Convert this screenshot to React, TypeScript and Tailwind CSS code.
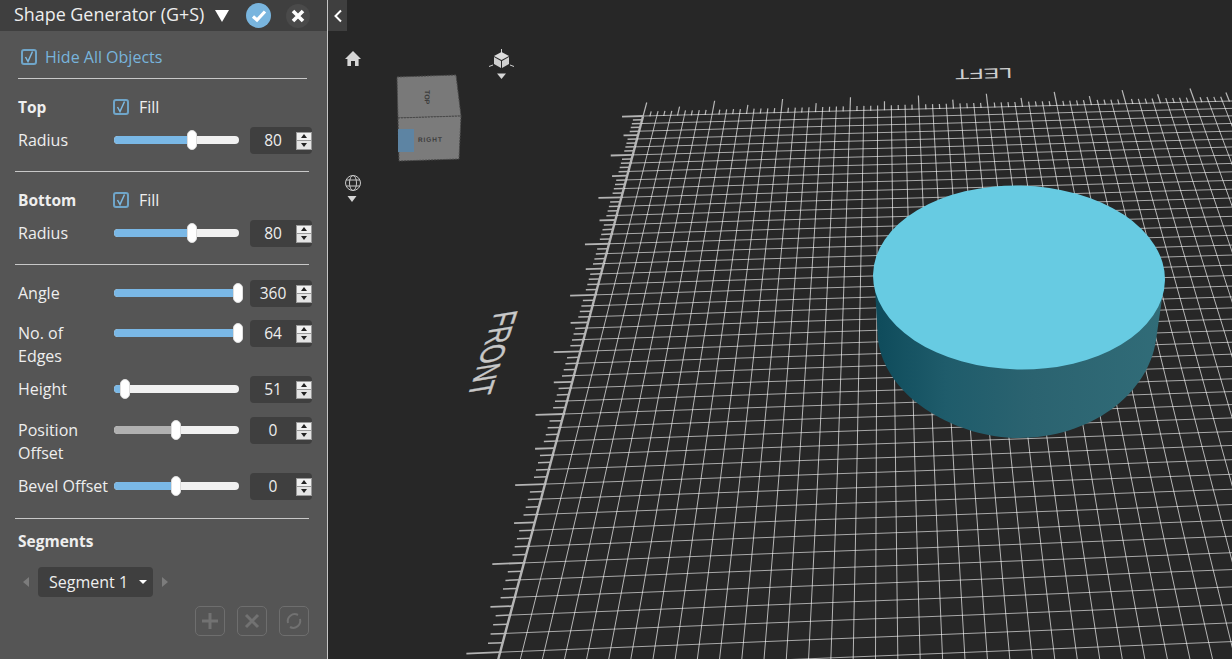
import React from "react";

// perspective of the floor grid, measured off the screenshot
const VP1 = { x: 881, y: -776 };
const VP2 = { x: 37000, y: -810 };
const K = 107700;
const W0 = 120.2;

const leftEdge = (w: number) => {
  const y = -780 + K / w;
  return { x: 881 - 0.2665 * (y + 776), y };
};
const topEdge = (n: number) => {
  const x = 643 + 6.9 * n;
  return { x, y: 116.5 - 0.0255 * (x - 643) };
};
const towardsVP2 = (p: { x: number; y: number }, x: number) => ({
  x,
  y: p.y + ((x - p.x) * (VP2.y - p.y)) / (VP2.x - p.x),
});
const towardsVP1 = (p: { x: number; y: number }, y: number) => ({
  x: VP1.x + ((p.x - VP1.x) * (y - VP1.y)) / (p.y - VP1.y),
  y,
});

function Floor() {
  const lines: React.ReactElement[] = [];
  for (let n = 0; n <= 90; n++) {
    const p = topEdge(n);
    if (n % 2 === 0) {
      const end = towardsVP1(p, 670);
      lines.push(
        <line
          key={"v" + n}
          x1={p.x}
          y1={p.y}
          x2={end.x}
          y2={end.y}
          stroke="#ffffff"
          strokeOpacity={0.66}
          strokeWidth={n === 0 ? 2.4 : 1}
        />
      );
    }
    const len = n % 10 === 0 ? 14 : n % 5 === 0 ? 9 : 5;
    const t = towardsVP1(p, p.y - len);
    lines.push(<line key={"tv" + n} x1={p.x} y1={p.y} x2={t.x} y2={t.y} stroke="#b8b8b8" strokeWidth={1.2} />);
  }
  for (let n = 0; n <= 100; n++) {
    const w = W0 - n * 0.5;
    const p = leftEdge(w);
    if (p.y > 680) break;
    if (n % 2 === 0) {
      const end = towardsVP2(p, 1240);
      lines.push(<line key={"h" + n} x1={p.x} y1={p.y} x2={end.x} y2={end.y} stroke="#ffffff" strokeOpacity={0.6} strokeWidth={1} />);
    }
    const scale = (p.y + 778) / 1430;
    const len = (n % 10 === 0 ? 34 : n % 5 === 0 ? 23 : 15) * scale;
    const t = towardsVP2(p, p.x - len);
    lines.push(<line key={"th" + n} x1={p.x} y1={p.y} x2={t.x} y2={t.y} stroke="#b4b4b4" strokeWidth={n % 5 === 0 ? 1.8 : 1.5} />);
  }
  return <g>{lines}</g>;
}

function Scene() {
  return (
    <svg className="absolute inset-0 w-full h-full" viewBox="328 0 904 659">
      <defs>
        <linearGradient id="side" x1="875" x2="1163" y1="0" y2="0" gradientUnits="userSpaceOnUse">
          <stop offset="0" stopColor="#0e4b5b" />
          <stop offset="0.25" stopColor="#1f5c6b" />
          <stop offset="0.55" stopColor="#2b6370" />
          <stop offset="1" stopColor="#316c78" />
        </linearGradient>
      </defs>
      <Floor />
      <text
        transform="translate(1012,68) rotate(178.5) scale(1,0.72)"
        fontFamily="'Liberation Sans', sans-serif"
        fontSize="20"
        fill="#cfcfcf"
        textLength="57"
        lengthAdjust="spacingAndGlyphs"
      >
        LEFT
      </text>
      <text
        transform="matrix(-0.30,0.92,-1.24,0.21,495,313)"
        fontFamily="'Liberation Sans', sans-serif"
        fontSize="27"
        fill="#c8c8c8"
        stroke="#c8c8c8"
        strokeWidth="0.4"
      >
        FRONT
      </text>

      <path d="M875,288 L878,340 C886,400 960,438 1018,438 C1090,438 1148,395 1156,340 L1163,292 Z" fill="url(#side)" />
      <ellipse cx="1019" cy="277.5" rx="146" ry="92" transform="rotate(1.2 1019 277.5)" fill="#67cbe2" />

      {/* view cube */}
      <polygon points="397,77 456,75 461,116 398,118" fill="#797979" stroke="#4a4a4a" strokeWidth="1" strokeDasharray="2 1" />
      <polygon points="398,118 461,116 459,159 399,161" fill="#7b7b7b" stroke="#4a4a4a" strokeWidth="1" strokeDasharray="2 1" />
      <rect x="398" y="129" width="16" height="23" fill="#5d84a3" />
      <text transform="translate(425,90) rotate(92)" fontFamily="'Liberation Sans', sans-serif" fontSize="7" fontWeight="700" fill="#3c3c3c">TOP</text>
      <text transform="translate(418,142) rotate(-1)" fontFamily="'Liberation Sans', sans-serif" fontSize="6.5" fontWeight="700" fill="#3c3c3c" textLength="24">RIGHT</text>

      {/* home */}
      <path d="M353,51 L361,59 L358.6,59 L358.6,66 L355,66 L355,61 L351,61 L351,66 L347.4,66 L347.4,59 L345,59 Z" fill="#d6d6d6" />

      {/* perspective cube */}
      <path d="M501.5,49 L501.5,53 M493,65 L489,66.5 M510,65 L514,66.5" stroke="#d0d0d0" strokeWidth="1" />
      <polygon points="501.5,52 509,56 501.5,60 494,56" fill="#dcdcdc" />
      <polygon points="494,57 501,61 501,68 494,64" fill="#cfcfcf" />
      <polygon points="509,57 502,61 502,68 509,64" fill="#cfcfcf" />
      <polygon points="497,73.5 506,73.5 501.5,79" fill="#d6d6d6" />

      {/* globe */}
      <g fill="none" stroke="#c8c8c8" strokeWidth="1">
        <circle cx="353" cy="183" r="7.5" />
        <ellipse cx="353" cy="183" rx="3.5" ry="7.5" />
        <path d="M346,180 H360 M346,186 H360" />
      </g>
      <polygon points="347.5,196 356.5,196 352,202" fill="#d6d6d6" />
    </svg>
  );
}

function Checkbox() {
  return (
    <span className="w-4 h-4 shrink-0 rounded-[3px] border-2 border-[#6fa5c9] flex items-center justify-center">
      <svg width="12" height="12" viewBox="0 0 12 12" fill="none">
        <path d="M2.5 6 L5 10.5 L9.5 0.5" stroke="#7cb9e2" strokeWidth="1.5" />
      </svg>
    </span>
  );
}

function Spinner() {
  return (
    <span className="w-4 h-[18px] flex flex-col border border-[#999] bg-[#ececec]">
      <span className="flex-1 flex items-center justify-center bg-[#f0f0f0] border-b border-[#999]">
        <span className="w-0 h-0 border-x-[3px] border-x-transparent border-b-[4px] border-b-[#222222]" />
      </span>
      <span className="flex-1 flex items-center justify-center bg-[#e4e4e4]">
        <span className="w-0 h-0 border-x-[3px] border-x-transparent border-t-[4px] border-t-[#222222]" />
      </span>
    </span>
  );
}

type RowProps = {
  label: React.ReactNode;
  pos: number;
  value: number;
  fill?: string;
  className?: string;
};

function SliderRow({ label, pos, value, fill = "bg-[#7ab8e6]", className = "" }: RowProps) {
  return (
    <div className={"flex items-start pl-[18px] " + className}>
      <div className="w-24 pt-[2px] leading-[23px] whitespace-nowrap">{label}</div>
      <div className="relative w-[125px] h-2 mt-[9px] rounded bg-[#f1f1f1]">
        <div className={"h-2 rounded-l " + fill} style={{ width: pos }} />
        <div className="absolute -top-1.5 w-2.5 h-5 -ml-[5px] rounded-[5px] bg-white border border-[#ddd]" style={{ left: pos }} />
      </div>
      <div className="ml-[11px] w-[62px] h-[27px] rounded bg-[#3f3f3f] flex items-center">
        <span className="w-[46px] text-center text-[15.5px]">{value}</span>
        <Spinner />
      </div>
    </div>
  );
}

function FillRow({ title }: { title: string }) {
  return (
    <div className="flex items-center h-7 pl-[18px] mt-3.5">
      <div className="w-[95px] pt-px font-bold text-[15.5px]">{title}</div>
      <Checkbox />
      <span className="ml-2.5">Fill</span>
    </div>
  );
}

function IconButton({ children }: { children: React.ReactNode }) {
  return (
    <div className="w-[30px] h-[30px] rounded-[5px] border border-[#6e6e6e] flex items-center justify-center">
      <svg width="20" height="20" viewBox="0 0 20 20" fill="none" stroke="#727272" strokeWidth="3">
        {children}
      </svg>
    </div>
  );
}

export default function App() {
  return (
    <div className="flex w-[1232px] h-[659px] overflow-hidden bg-[#272727] font-['Open_Sans',sans-serif] text-[16px] text-[#eeeeee]">
      <div className="w-[328px] h-full shrink-0 bg-[#555555] border-r border-[#c4c4c4]">
        <div className="flex items-center h-[31px] bg-[#3f3f3f] pl-3.5">
          <span className="text-[17.9px] whitespace-nowrap pb-0.5">Shape Generator (G+S)</span>
          <span className="ml-[11px] w-0 h-0 border-x-[7px] border-x-transparent border-t-[12px] border-t-white" />
          <span className="ml-[17px] w-[25px] h-[25px] rounded-full bg-[#79b5de] flex items-center justify-center">
            <svg width="16" height="14" viewBox="0 0 16 14" fill="none">
              <path d="M2 7.5 L6 11 L14 2.5" stroke="white" strokeWidth="3.2" />
            </svg>
          </span>
          <span className="ml-[15px] w-6 h-6 rounded-full bg-[#4a4a4a] flex items-center justify-center">
            <svg width="14" height="14" viewBox="0 0 14 14" fill="none">
              <path d="M2 2 L12 12 M12 2 L2 12" stroke="white" strokeWidth="3.6" />
            </svg>
          </span>
        </div>

        <div className="flex items-center gap-2 pl-[21px] pt-[5px] h-[47px] text-[#78b4dc]">
          <Checkbox />
          <span>Hide All Objects</span>
        </div>
        <div className="h-px bg-[#c8c8c8] ml-[18px] mr-5" />

        <FillRow title="Top" />
        <SliderRow label="Radius" pos={78} value={80} className="mt-1.5" />
        <div className="h-px bg-[#c8c8c8] ml-[15px] mr-[18px] mt-[17px]" />

        <FillRow title="Bottom" />
        <SliderRow label="Radius" pos={78} value={80} className="mt-1.5" />
        <div className="h-px bg-[#c8c8c8] ml-[15px] mr-[18px] mt-[17px]" />

        <SliderRow label="Angle" pos={124} value={360} className="mt-[15px]" />
        <SliderRow label={<>No. of<br />Edges</>} pos={124} value={64} className="mt-[13px]" />
        <SliderRow label="Height" pos={11} value={51} className="mt-2" />
        <SliderRow label={<>Position<br />Offset</>} pos={62} value={0} fill="bg-[#b0b0b0]" className="mt-3.5" />
        <SliderRow label="Bevel Offset" pos={62} value={0} className="mt-2" />
        <div className="h-px bg-[#c8c8c8] ml-[15px] mr-[18px] mt-[18px]" />

        <div className="pl-[18px] mt-2.5 h-6 leading-6 font-bold text-[15.5px]">Segments</div>
        <div className="flex items-center mt-3.5 pl-[23px]">
          <span className="w-0 h-0 border-y-[5px] border-y-transparent border-r-[6px] border-r-[#7c7c7c]" />
          <div className="ml-[9px] w-[115px] h-[30px] rounded bg-[#3f3f3f] flex items-center pl-[11px]">
            <span>Segment 1</span>
            <span className="ml-[11px] w-0 h-0 border-x-4 border-x-transparent border-t-[4px] border-t-white" />
          </div>
          <span className="ml-[9px] w-0 h-0 border-y-[5px] border-y-transparent border-l-[6px] border-l-[#7c7c7c]" />
        </div>
        <div className="flex justify-end gap-3 mt-[9px] pr-[18px]">
          <IconButton>
            <path d="M10 2 V18 M2 10 H18" />
          </IconButton>
          <IconButton>
            <path d="M4 4 L16 16 M16 4 L4 16" />
          </IconButton>
          <IconButton>
            <path d="M4 12 A7 7 0 0 1 14 4 M16 8 A7 7 0 0 1 6 16" strokeWidth="2" />
          </IconButton>
        </div>
      </div>

      <div className="relative flex-1 h-full">
        <Scene />
        <div className="absolute left-0 top-0 w-[19px] h-[31px] bg-[#3f3f3f] flex items-center justify-center">
          <svg width="10" height="14" viewBox="0 0 10 14" fill="none">
            <path d="M8 1.5 L2.5 7 L8 12.5" stroke="white" strokeWidth="2" />
          </svg>
        </div>
      </div>
    </div>
  );
}
